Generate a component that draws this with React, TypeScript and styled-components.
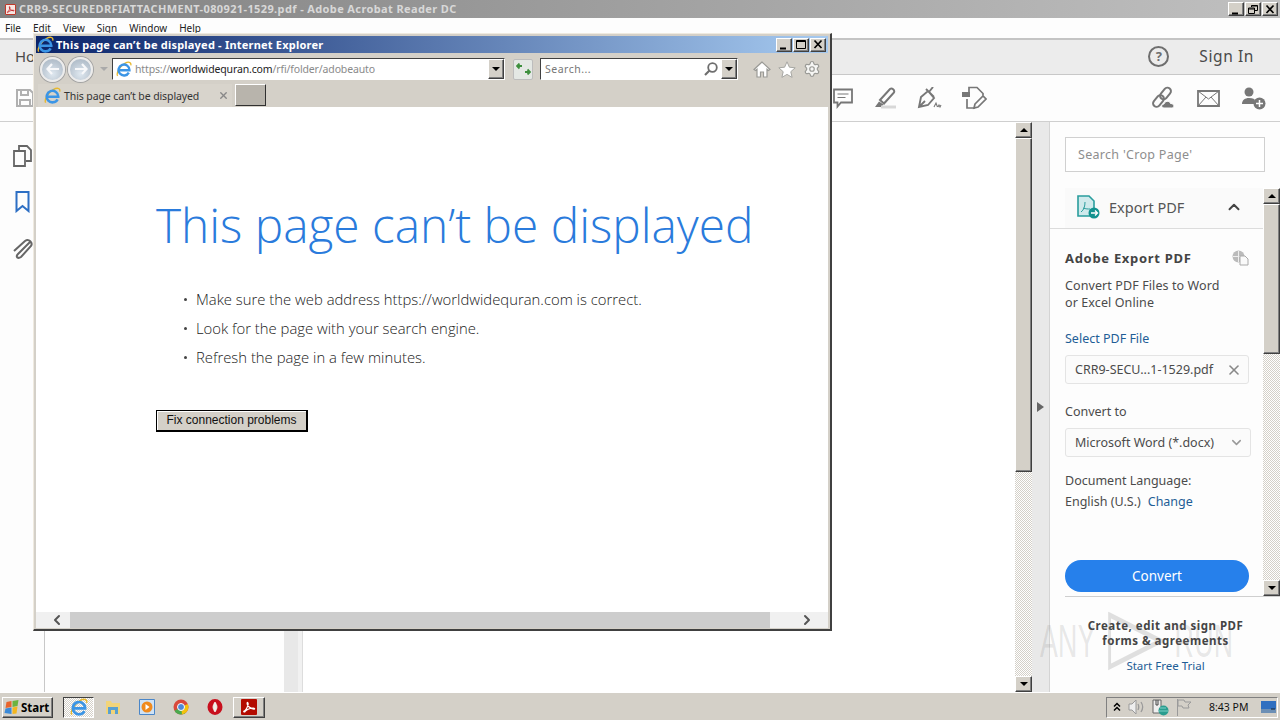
import React from 'react'
import styled, { createGlobalStyle } from 'styled-components'
import { ChevronDown, ChevronLeft, ChevronRight, ChevronUp, Settings, X } from 'lucide-react'

const classic = '#d4d0c8'
const ui = '"Noto Sans", "Open Sans", sans-serif'

const GlobalStyle = createGlobalStyle`
  html, body { margin: 0; padding: 0; width: 1280px; height: 720px; overflow: hidden; }
  * { box-sizing: border-box; }
  body { font-family: ${ui}; background: ${classic}; }
`

const Desktop = styled.div`
  position: relative;
  width: 1280px;
  height: 720px;
  display: flex;
  flex-direction: column;
  overflow: hidden;
`

/* ---------- win classic bits ---------- */

const Raised = styled.div<{ $w?: number; $h?: number; $bg?: string }>`
  width: ${({ $w }) => $w ?? 16}px;
  height: ${({ $h }) => $h ?? 16}px;
  flex: none;
  display: flex;
  align-items: center;
  justify-content: center;
  background: ${({ $bg }) => $bg ?? classic};
  border: 1px solid;
  border-color: #fff #404040 #404040 #fff;
  box-shadow: inset -1px -1px 0 #808080;
`

const Arrow = styled.span<{ $dir?: 'up' | 'down' }>`
  width: 0;
  height: 0;
  border-left: 4px solid transparent;
  border-right: 4px solid transparent;
  ${({ $dir }) => ($dir === 'up' ? 'border-bottom: 4px solid #000;' : 'border-top: 4px solid #000;')}
`

const WinButtons = styled.div`
  display: flex;
  gap: 1px;
`

const Scrollbar = styled.div`
  width: 17px;
  flex: none;
  display: flex;
  flex-direction: column;
  background: conic-gradient(#d4d0c8 25%, #fff 0 50%, #d4d0c8 0 75%, #fff 0);
  background-size: 2px 2px;
`

const ScrollThumb = styled(Raised)<{ $size: number }>`
  width: 100%;
  height: ${({ $size }) => $size}px;
`

const ScrollGap = styled.div`
  flex: 1;
`

const WinGlyph = ({ kind }: { kind: 'min' | 'max' | 'restore' | 'close' }) => (
  <svg width="12" height="11" viewBox="0 0 12 11" fill="none" stroke="#000">
    {kind === 'min' && <path d="M2 9.5h6" strokeWidth="2" />}
    {kind === 'max' && <path d="M1.5 1.5h9v8h-9zM1.5 2.5h9" />}
    {kind === 'restore' && <path d="M4.5 3V1.500h6v5H8M1.500 4h6v5.500h-6zM1.500 5h6M4.500 2h6" />}
    {kind === 'close' && <path d="M2.500 1.500l7 7.500M9.500 1.500l-7 7.500" strokeWidth="1.700" />}
  </svg>
)

/* ---------- drawn icons ---------- */

const IeLogo = ({ size }: { size: number }) => (
  <svg width={size} height={size} viewBox="0 0 20 20" fill="none">
    <path d="M2 18.500c-2-3 2-11 9-15.500 4-2.300 8.500-2.300 7.500 2.500" stroke="#e8b82c" strokeWidth="1.600" />
    <path d="M16 14.500A6.800 6.800 0 1 1 16.800 11.500H4.500" stroke="#3b95e6" strokeWidth="3" />
  </svg>
)

const AcrobatGlyph = ({ size, color = '#fff' }: { size: number; color?: string }) => (
  <svg width={size} height={size} viewBox="0 0 16 16" fill="none">
    <path
      d="M2 13c2-1 4-4 5-8 .3-2-1-3-1.200-1.500C5.500 6 9 10 13.500 10.500c1.500 0 1-1.500-1-1.300C9 9.500 5 11 3.500 13c-.5 1-1.500.5-1.500 0z"
      stroke={color}
      strokeWidth="1.400"
    />
  </svg>
)

const SaveIcon = () => (
  <svg width="20" height="20" viewBox="0 0 20 20" fill="none" stroke="#b0b0b0" strokeWidth="2">
    <path d="M2 2h13l3 3v13H2zM6 2v5h7V2M5 18v-6h10v6" />
  </svg>
)

const CommentIcon = () => (
  <svg width="20" height="21" viewBox="0 0 20 21" fill="none" stroke="#777" strokeWidth="1.800">
    <path d="M1 1.500h18v13H8l-3.500 4v-4H1z" />
    <path d="M4.500 6h11M4.500 9.500h8" strokeWidth="1" />
  </svg>
)

const HighlightIcon = () => (
  <svg width="24" height="22" viewBox="0 0 24 22" fill="none">
    <path d="M7 13L17 2c2-1.500 5 1 4 3.500L11 16.500z" stroke="#777" strokeWidth="2" />
    <path d="M6 14.500L2 20h6l2.500-2.500z" fill="#777" />
    <path d="M8 20h15" stroke="#d8d8d8" strokeWidth="3" />
  </svg>
)

const SignIcon = () => (
  <svg width="25" height="22" viewBox="0 0 25 22" fill="none" stroke="#777">
    <path d="M2 20l2-10 7-6 6 7-6 7zM2 20l6-6M12 5l4-5M9 2l8 8" strokeWidth="1.900" />
    <path d="M17 20l2-4 1.500 4M21 20l1-2 1 2 1-2" strokeWidth="1.100" />
  </svg>
)

const StampIcon = () => (
  <svg width="25" height="24" viewBox="0 0 25 24" fill="none" stroke="#777" strokeWidth="1.700">
    <path d="M7 6V1.500h8l6 6v2M5 13v9h8" />
    <path d="M0 6h8v5H0z" fill="#777" stroke="none" />
    <path d="M13 18l8-8 3 3-8 8-4 1z" />
  </svg>
)

const LinkCloudIcon = () => (
  <svg width="25" height="24" viewBox="0 0 25 24" fill="none">
    <rect x="1" y="11.500" width="13" height="7" rx="3.500" stroke="#777" strokeWidth="2" transform="rotate(-50 7.500 15)" />
    <rect x="8" y="4" width="13" height="7" rx="3.500" stroke="#777" strokeWidth="2" transform="rotate(-50 14.500 7.500)" />
    <path d="M13 22c-3 0-3-4 0-4 .5-3 5.500-4 6.500-.5 3.500-.5 5 4.500 1 4.500z" fill="#777" stroke="#fdfdfd" />
  </svg>
)

const MailIcon = () => (
  <svg width="23" height="17" viewBox="0 0 23 17" fill="none" stroke="#777">
    <path d="M1 1h21v15H1z" strokeWidth="1.800" />
    <path d="M1 1l10.500 8L22 1M1 16l8-9M22 16l-8-9" strokeWidth="1" />
  </svg>
)

const UserAddIcon = () => (
  <svg width="25" height="23" viewBox="0 0 25 23" fill="none">
    <circle cx="8" cy="5" r="4.500" fill="#777" />
    <path d="M1 17c0-4 3-6 7-6s6 1 6 3l-1 3z" fill="#777" />
    <circle cx="18.500" cy="16.500" r="6" fill="#777" />
    <path d="M18.500 13v7M15 16.500h7" stroke="#fff" strokeWidth="1.500" />
  </svg>
)

const PagesIcon = () => (
  <svg width="19" height="22" viewBox="0 0 19 22" fill="none" stroke="#666" strokeWidth="1.800">
    <path d="M6 5V1h8l4 4v11h-5" />
    <path d="M1 6h11v15H1z" />
  </svg>
)

const BookmarkIcon = () => (
  <svg width="15" height="22" viewBox="0 0 15 22" fill="none" stroke="#2d6fc4" strokeWidth="2">
    <path d="M1.500 1h12v19l-6-5-6 5z" />
  </svg>
)

const ClipIcon = () => (
  <svg width="21" height="22" viewBox="0 0 21 22" fill="none" stroke="#666" strokeWidth="2">
    <path d="M18 5L6 17c-3 3 0 5 3 3L19 9c2-3-2-8-6-5L2 14" />
  </svg>
)

const ExportIcon = () => (
  <svg width="23" height="24" viewBox="0 0 23 24" fill="none">
    <path d="M1 1h11l5 5v15H1z" fill="#cfeaec" stroke="#2a9d9d" strokeWidth="1.600" />
    <path d="M4 17c3-2 4-6 4-10M6 13c3 1 5 1 7 1" stroke="#2a9d9d" />
    <circle cx="17" cy="18" r="5.500" fill="#12928f" />
    <path d="M14 18h6M18 15.500l2.500 2.500-2.500 2.500" stroke="#fff" strokeWidth="1.300" />
  </svg>
)

const CloudDocIcon = () => (
  <svg width="17" height="16" viewBox="0 0 17 16" fill="none">
    <circle cx="6.500" cy="6.500" r="6" fill="#bbb" />
    <path d="M1 6.500h11M6.500 1v11" stroke="#eee" />
    <path d="M8 6h5l3 3v6H8z" fill="#fafafa" stroke="#aaa" />
  </svg>
)

const RefreshIcon = () => (
  <svg width="15" height="12" viewBox="0 0 15 12" fill="none" stroke="#3d8f3d" strokeWidth="1.800">
    <path d="M6 3H1M3.500 .5L1 3l2.500 2.500M9 9h5M11.500 11.500L14 9l-2.500-2.500" />
  </svg>
)

const NavArrow = ({ back }: { back?: boolean }) => (
  <svg width="14" height="12" viewBox="0 0 14 12" fill="none" stroke="#f7f8fa" strokeWidth="2.200">
    <path d={back ? 'M13 6H2M6 1L1.500 6 6 11' : 'M1 6h11M8 1l4.500 5L8 11'} />
  </svg>
)

const MagnifierIcon = () => (
  <svg width="14" height="14" viewBox="0 0 14 14" fill="none" stroke="#6e6e6e" strokeWidth="1.800">
    <circle cx="8.500" cy="5.500" r="4.300" />
    <path d="M5.500 8.500L1 13" strokeWidth="2.200" />
  </svg>
)

const HomeGlyph = () => (
  <svg width="18" height="17" viewBox="0 0 18 17" fill="#fff" stroke="#9a9a96" strokeWidth="1.200">
    <path d="M9 1L1 8.500l1.500 1L4 8.200V16h3.500v-5h3v5H14V8.200l1.500 1.300L17 8.500z" />
  </svg>
)

const StarGlyph = () => (
  <svg width="18" height="17" viewBox="0 0 18 17" fill="#fff" stroke="#a6a6a2">
    <path d="M9 .8l2.400 5.400 5.800.6-4.400 3.900 1.300 5.700L9 13.400l-5.100 3 1.300-5.700L.8 6.800l5.800-.6z" />
  </svg>
)

const StartFlag = () => (
  <svg width="17" height="15" viewBox="0 0 16 15">
    <path d="M2 2l5-1v6l-6 1z" fill="#e8642c" />
    <path d="M8 1l6-1-1 6-5 1z" fill="#6cb33f" />
    <path d="M1 8.500l6-1V14l-7-1z" fill="#3b8ad8" />
    <path d="M8 7.500l5-1-1 7-4 .5z" fill="#f3b61f" />
  </svg>
)

const FolderIcon = () => (
  <svg width="16" height="16" viewBox="0 0 16 16">
    <path d="M1 2h5l1 2h8v11H1z" fill="#f2d479" />
    <path d="M3 8h10v7h-3v-4H6v4H3z" fill="#5aa0d0" />
  </svg>
)

const MediaIcon = () => (
  <svg width="16" height="16" viewBox="0 0 16 16">
    <path d="M.5 .5h15v15H.5z" fill="#cfe2f5" stroke="#4a86c8" />
    <circle cx="8" cy="8" r="5.500" fill="#f08a1d" />
    <path d="M6.500 5l4 3-4 3z" fill="#fff" />
  </svg>
)

const ChromeIcon = () => (
  <svg width="16" height="16" viewBox="0 0 16 16">
    <circle cx="8" cy="8" r="7.500" fill="#d9483b" />
    <path d="M8 8L1.500 11.700A7.500 7.500 0 0 0 8 15.500c2 0 4-.8 5-2z" fill="#4aa94e" />
    <path d="M8 8l6.800-3A7.500 7.500 0 0 1 9 15.400z" fill="#f4c20d" />
    <circle cx="8" cy="8" r="3.500" fill="#4f88d8" stroke="#fff" />
  </svg>
)

const OperaIcon = () => (
  <svg width="16" height="16" viewBox="0 0 16 16" fill="none">
    <ellipse cx="8" cy="8" rx="5" ry="5.500" stroke="#c8101e" strokeWidth="5" />
    <ellipse cx="8" cy="8" rx="1.700" ry="5" fill="#f4f0ea" />
  </svg>
)

const AcrobatTile = styled.div<{ $size: number }>`
  width: ${({ $size }) => $size}px;
  height: ${({ $size }) => $size}px;
  flex: none;
  display: flex;
  align-items: center;
  justify-content: center;
  background: #b30b00;
  border-radius: 1px;
`

const TitleTile = styled(AcrobatTile)`
  background: #f7e6e2;
  border: 1px solid #c0392b;
`

const SpeakerIcon = () => (
  <svg width="17" height="16" viewBox="0 0 17 16" fill="none" stroke="#9a9a9a">
    <path d="M1 5h3l4-4v14l-4-4H1z" fill="#eee" />
    <path d="M10 5c1 2 1 4 0 6M13 3c2 3 2 7 0 10" strokeWidth="1.300" />
  </svg>
)

const NetworkIcon = () => (
  <svg width="17" height="17" viewBox="0 0 17 17">
    <path d="M1 1h8v13H1z" fill="#eee" stroke="#666" />
    <path d="M4 1v5h2V1" fill="none" stroke="#444" />
    <circle cx="11.500" cy="11.500" r="5" fill="#2a9d8f" />
    <path d="M8 9h6M7 12h9" stroke="#7fd1c7" />
  </svg>
)

const FlagIcon = () => (
  <svg width="16" height="17" viewBox="0 0 16 17" fill="none" stroke="#9a9a9a">
    <path d="M1.500 0v17M2 1h6l1 2h6l-3 3 1 3H7L6 7H2z" />
  </svg>
)

const ScreenIcon = () => (
  <svg width="15" height="12" viewBox="0 0 15 12">
    <rect width="15" height="12" fill="#2f6fc0" />
    <rect y="8" width="15" height="4" fill="#6c8fb5" />
    <path d="M10 8h4" stroke="#123" />
  </svg>
)

const TrayChevron = () => (
  <svg width="8" height="10" viewBox="0 0 8 10" fill="none" stroke="#000" strokeWidth="1.500">
    <path d="M1 4.500L4 1.500l3 3M1 8.500l3-3 3 3" />
  </svg>
)

/* ---------- acrobat ---------- */

const Acrobat = styled.div`
  height: 692px;
  flex: none;
  display: flex;
  flex-direction: column;
  background: #fff;
`

const AppTitle = styled.div`
  height: 18px;
  flex: none;
  display: flex;
  align-items: center;
  padding: 0 2px 0 5px;
  background: linear-gradient(90deg, #808080, #c0c0c0);
  color: #d8d8d8;
  font: bold 11px/18px "Noto Sans", sans-serif;
  letter-spacing: 0.38px;
`

const AppTitleText = styled.span`
  flex: 1;
  margin-left: 3px;
  white-space: nowrap;
`

const MenuBar = styled.div`
  height: 20px;
  flex: none;
  display: flex;
  align-items: center;
  gap: 12px;
  padding-left: 5px;
  background: #fdfdfd;
  color: #222;
  font-size: 10px;
`

const TabBar = styled.div`
  height: 37px;
  flex: none;
  display: flex;
  align-items: center;
  padding: 0 26px 2px 15px;
  background: #ececec;
  border-top: 2px solid #c4c4c4;
  border-bottom: 1px solid #c8c8c8;
  color: #4a4a4a;
`

const HomeTab = styled.span`
  flex: 1;
  font-size: 15px;
`

const HelpBadge = styled.span`
  width: 21px;
  height: 21px;
  display: flex;
  align-items: center;
  justify-content: center;
  margin-right: 30px;
  border: 2px solid #6e6e6e;
  border-radius: 50%;
  color: #6e6e6e;
  font-size: 13px;
  font-weight: 700;
`

const SignInLabel = styled.span`
  font-size: 15.500px;
  letter-spacing: 0.6px;
`

const ToolBar = styled.div`
  height: 47px;
  flex: none;
  display: flex;
  align-items: center;
  padding: 0 14px 0 15px;
  background: #fdfdfd;
  border-bottom: 1px solid #cfcfcf;
`

const ToolGroup = styled.div<{ $gap: number; $lead?: number }>`
  display: flex;
  align-items: center;
  gap: ${({ $gap }) => $gap}px;
  margin-left: ${({ $lead }) => $lead ?? 0}px;
  flex: none;
`

const ToolSpacer = styled.div`
  flex: 1;
`

const Workspace = styled.div`
  flex: 1;
  min-height: 0;
  display: flex;
`

const LeftRail = styled.div`
  width: 45px;
  flex: none;
  display: flex;
  flex-direction: column;
  align-items: center;
  gap: 24px;
  padding: 23px 12px 0;
  background: #fdfdfd;
  border-right: 1px solid #c8c8c8;
`

const ThumbPane = styled.div`
  width: 239px;
  flex: none;
  background: #fefefe;
`

const PaneDivider = styled.div`
  width: 19px;
  flex: none;
  background: linear-gradient(90deg, #e8e8e8 0 14px, #f1f1f1 14px);
  border-right: 1px solid #ddd;
`

const PageView = styled.div`
  flex: 1;
  background: #fff;
`

const CollapseGutter = styled.div`
  width: 18px;
  flex: none;
  display: flex;
  align-items: center;
  justify-content: center;
  background: #e9e9e9;
  border-right: 1px solid #d4d4d4;
`

const GutterArrow = styled.span`
  border-top: 5px solid transparent;
  border-bottom: 5px solid transparent;
  border-left: 7px solid #666;
`

const SidePanel = styled.div`
  width: 230px;
  flex: none;
  display: flex;
  flex-direction: column;
  padding-top: 15px;
  background: #fdfdfd;
  color: #4b4b4b;
  font-size: 12.500px;
`

const SearchBox = styled.div`
  width: 200px;
  height: 35px;
  flex: none;
  margin-left: 15px;
  padding-left: 12px;
  display: flex;
  align-items: center;
  background: #fff;
  border: 1px solid #d0d0d0;
  color: #8e8e8e;
  font-size: 12.500px;
  letter-spacing: 0.3px;
`

const PanelScroll = styled.div`
  flex: none;
  height: 408px;
  margin-top: 16px;
  display: flex;
`

const PanelColumn = styled.div`
  flex: 1;
  min-width: 0;
  display: flex;
  flex-direction: column;
`

const ExportHeader = styled.div`
  height: 40px;
  flex: none;
  margin-left: 15px;
  padding: 0 20px 2px 12px;
  display: flex;
  align-items: center;
  background: #fafafa;
  font-size: 14.500px;
  color: #555;
`

const ExportTitle = styled.span`
  flex: 1;
  margin-left: 9px;
`

const ExportBody = styled.div`
  flex: 1;
  display: flex;
  flex-direction: column;
  padding: 20px 14px 4px 15px;
  border-top: 1px solid #dcdcdc;
`

const BodyHeading = styled.div`
  height: 17px;
  display: flex;
  align-items: center;
  justify-content: space-between;
  color: #444;
  font-size: 13px;
  font-weight: 700;
  letter-spacing: 0.7px;
`

const BodyText = styled.div`
  margin-top: 11px;
  line-height: 17px;
  letter-spacing: 0.1px;
`

const FieldLabel = styled.div<{ $top: number; $link?: boolean }>`
  margin-top: ${({ $top }) => $top}px;
  line-height: 17px;
  color: ${({ $link }) => ($link ? '#1f5d96' : 'inherit')};
`

const FieldBox = styled.div<{ $w: number }>`
  width: ${({ $w }) => $w}px;
  height: 29px;
  flex: none;
  margin-top: 8px;
  padding: 0 6px 0 9px;
  display: flex;
  align-items: center;
  justify-content: space-between;
  background: #fbfbfb;
  border: 1px solid #e4e4e4;
  border-radius: 3px;
  white-space: nowrap;
`

const ChangeLink = styled.span`
  margin-left: 7px;
  color: #1f5d96;
`

const ConvertButton = styled.div`
  height: 32px;
  flex: none;
  margin-top: auto;
  display: flex;
  align-items: center;
  justify-content: center;
  border-radius: 16px;
  background: #2680eb;
  color: #fff;
  font-size: 13.500px;
`

const PanelRule = styled.div`
  height: 1px;
  flex: none;
  margin-left: 15px;
  background: #cfcfcf;
`

const Promo = styled.div`
  position: relative;
  flex: 1;
  display: flex;
  flex-direction: column;
  align-items: center;
  padding: 21px 0 0 1px;
  text-align: center;
  color: #444;
  font-size: 11.500px;
  font-weight: 700;
  line-height: 15px;
  letter-spacing: 0.5px;
`

const PromoLink = styled.div`
  margin-top: 10px;
  color: #1f5d96;
  font-weight: 400;
  letter-spacing: 0;
`

const Watermark = styled.div`
  position: absolute;
  left: -10px;
  top: 14px;
  display: flex;
  align-items: center;
  gap: 18px;
  color: rgba(120, 120, 120, 0.18);
  font: 400 46px/50px "Liberation Sans", sans-serif;
  white-space: nowrap;
  pointer-events: none;
  transform: scaleX(0.58);
  transform-origin: left center;
`

/* ---------- internet explorer window ---------- */

const IeWindow = styled.div`
  position: absolute;
  left: 33px;
  top: 33px;
  width: 799px;
  height: 598px;
  display: flex;
  flex-direction: column;
  padding: 2px 2px 1px 2px;
  background: ${classic};
  border-right: 2px solid #404040;
  border-bottom: 2px solid #404040;
  border-top: 1px solid #efeae0;
  border-left: 1px solid #efeae0;
`

const IeTitle = styled.div`
  height: 17px;
  flex: none;
  display: flex;
  align-items: center;
  padding: 0 2px 0 1px;
  background: linear-gradient(90deg, #0a246a, #a6caf0);
  color: #fff;
  font: bold 11px/17px "Noto Sans", sans-serif;
  letter-spacing: 0.21px;
`

const IeTitleText = styled.span`
  flex: 1;
  margin-left: 2px;
  white-space: nowrap;
`

const IeToolbar = styled.div`
  height: 31px;
  flex: none;
  display: flex;
  align-items: center;
  padding: 1px 14px 0 4px;
`

const NavButton = styled.div`
  width: 25px;
  height: 25px;
  margin-right: 3px;
  flex: none;
  display: flex;
  align-items: center;
  justify-content: center;
  border-radius: 50%;
  background: radial-gradient(circle at 50% 70%, #dfe8f0, #b4c0cc 72%);
  border: 2px solid #ececec;
  box-shadow: 0 0 0 1px #a4a4a4;
`

const NavDrop = styled.span`
  margin: 0 4px;
  border-left: 4px solid transparent;
  border-right: 4px solid transparent;
  border-top: 4px solid #aaa;
`

const SunkenField = styled.div<{ $w: number }>`
  width: ${({ $w }) => $w}px;
  height: 22px;
  flex: none;
  display: flex;
  align-items: center;
  background: #fff;
  border: 1px solid;
  border-color: #404040 #fff #fff #404040;
  font-size: 10.500px;
`

const AddressIcon = styled.span`
  display: flex;
  margin-left: 3px;
`

const AddressHost = styled.span`
  flex: 1;
  margin-left: 3px;
  color: #8a8a8a;
  white-space: nowrap;
  letter-spacing: -0.14px;
`

const AddressStrong = styled.span`
  color: #222;
`

const SearchHint = styled.span`
  flex: 1;
  margin-left: 4px;
  color: #777;
  letter-spacing: 0.5px;
`

const MagnifierSlot = styled.span`
  display: flex;
  margin-right: 3px;
`

const FavGroup = styled.div`
  display: flex;
  align-items: center;
  gap: 7px;
  margin-left: 15px;
`

const RefreshButton = styled.div`
  width: 20px;
  height: 21px;
  flex: none;
  margin: 0 7px 0 8px;
  display: flex;
  align-items: center;
  justify-content: center;
  background: #e4e8e4;
  border: 1px solid #bdbdbd;
  border-radius: 2px;
`

const IeTabs = styled.div`
  height: 23px;
  flex: none;
  display: flex;
  align-items: stretch;
  gap: 3px;
  padding-left: 2px;
`

const IeTab = styled.div`
  width: 194px;
  display: flex;
  align-items: center;
  padding: 0 3px 0 6px;
  background: #d8d4cc;
  color: #333;
  font-size: 10.500px;
`

const IeTabText = styled.span`
  flex: 1;
  margin-left: 3px;
  white-space: nowrap;
  letter-spacing: -0.1px;
`

const NewTab = styled(Raised)`
  width: 31px;
  height: 22px;
  background: #b8b4ac;
  border-color: #fff #303030 #303030 #fff;
  box-shadow: none;
`

const IeContent = styled.div`
  flex: 1;
  min-height: 0;
  padding: 87px 0 0 120px;
  background: #fff;
`

const ErrorTitle = styled.h1`
  margin: 0;
  color: #2a7bdc;
  font: 300 47.800px/62px "Open Sans", sans-serif;
  white-space: nowrap;
`

const Tips = styled.ul`
  margin: 29px 0 0;
  padding: 0 0 0 40px;
  list-style: none;
`

const Tip = styled.li`
  position: relative;
  height: 29px;
  color: #222;
  font: 300 14.850px/29px "Open Sans", sans-serif;
  white-space: nowrap;

  &::before {
    content: '';
    position: absolute;
    left: -12px;
    top: 13px;
    width: 3px;
    height: 3px;
    border-radius: 50%;
    background: #444;
  }
`

const FixButton = styled.button`
  display: block;
  width: 152px;
  height: 22px;
  margin-top: 38px;
  padding: 0 0 1px;
  background: ${classic};
  border: 1px solid #000;
  border-right-width: 2px;
  border-bottom-width: 2px;
  box-shadow: inset 1px 1px 0 #fff;
  color: #111;
  font: 12px "Liberation Sans", sans-serif;
`

const HScroll = styled.div`
  height: 16px;
  flex: none;
  display: flex;
  align-items: center;
  background: #f0f0f0;
  color: #555;
`

const HScrollEnd = styled.div<{ $w: number; $inset: number }>`
  width: ${({ $w }) => $w}px;
  height: 100%;
  flex: none;
  padding-left: ${({ $inset }) => $inset}px;
  display: flex;
  align-items: center;
  justify-content: center;
`

const HScrollThumb = styled.div`
  flex: 1;
  height: 100%;
  background: #cdcdcd;
`

/* ---------- taskbar ---------- */

const Taskbar = styled.div`
  flex: 1;
  display: flex;
  align-items: center;
  padding: 1px 2px 0 2px;
  background: ${classic};
  border-top: 1px solid #fff;
`

const StartButton = styled(Raised)`
  width: 51px;
  height: 21px;
  gap: 0;
  justify-content: flex-start;
  padding-left: 1px;
  color: #000;
  font-size: 11.500px;
  font-weight: 700;
`

const IeTask = styled.div`
  width: 31px;
  height: 21px;
  flex: none;
  margin-left: 10px;
  display: flex;
  align-items: center;
  justify-content: center;
  border: 1px solid;
  border-color: #404040 #fff #fff #404040;
  background: conic-gradient(#d4d0c8 25%, #fff 0 50%, #d4d0c8 0 75%, #fff 0);
  background-size: 2px 2px;
`

const QuickLaunch = styled.div`
  display: flex;
  align-items: center;
  gap: 18px;
  margin-left: 11px;
`

const AcrobatTask = styled(Raised)`
  width: 32px;
  height: 21px;
  margin-left: 10px;
`

const TaskSpacer = styled.div`
  flex: 1;
`

const Tray = styled.div`
  width: 172px;
  height: 21px;
  flex: none;
  display: flex;
  align-items: center;
  padding: 0 1px 0 6px;
  border: 1px solid;
  border-color: #808080 #fff #fff #808080;
`

const TrayIcons = styled.div`
  display: flex;
  align-items: center;
  gap: 7px;
`

const Clock = styled.span`
  flex: 1;
  margin-left: 17px;
  color: #111;
  font-size: 10.500px;
  white-space: nowrap;
`

const appTitle = 'CRR9-SECUREDRFIATTACHMENT-080921-1529.pdf - Adobe Acrobat Reader DC'

export default function App() {
  return (
    <>
      <GlobalStyle />
      <Desktop>
        <Acrobat>
          <AppTitle>
            <TitleTile $size={11}>
              <AcrobatGlyph size={9} color="#c0161a" />
            </TitleTile>
            <AppTitleText>{appTitle}</AppTitleText>
            <WinButtons>
              <Raised $w={16} $h={14}><WinGlyph kind="min" /></Raised>
              <Raised $w={16} $h={14}><WinGlyph kind="restore" /></Raised>
              <Raised $w={16} $h={14}><WinGlyph kind="close" /></Raised>
            </WinButtons>
          </AppTitle>
          <MenuBar>
            {['File', 'Edit', 'View', 'Sign', 'Window', 'Help'].map(m => (
              <span key={m}>{m}</span>
            ))}
          </MenuBar>
          <TabBar>
            <HomeTab>Home</HomeTab>
            <HelpBadge>?</HelpBadge>
            <SignInLabel>Sign In</SignInLabel>
          </TabBar>
          <ToolBar>
            <SaveIcon />
            <ToolGroup $gap={20} $lead={798}>
              <CommentIcon />
              <HighlightIcon />
              <SignIcon />
              <StampIcon />
            </ToolGroup>
            <ToolSpacer />
            <ToolGroup $gap={21}>
              <LinkCloudIcon />
              <MailIcon />
              <UserAddIcon />
            </ToolGroup>
          </ToolBar>
          <Workspace>
            <LeftRail>
              <PagesIcon />
              <BookmarkIcon />
              <ClipIcon />
            </LeftRail>
            <ThumbPane />
            <PaneDivider />
            <PageView />
            <Scrollbar>
              <Raised $w={17} $h={16}><Arrow $dir="up" /></Raised>
              <ScrollThumb $size={334} />
              <ScrollGap />
              <Raised $w={17} $h={16}><Arrow /></Raised>
            </Scrollbar>
            <CollapseGutter>
              <GutterArrow />
            </CollapseGutter>
            <SidePanel>
              <SearchBox>Search 'Crop Page'</SearchBox>
              <PanelScroll>
                <PanelColumn>
                  <ExportHeader>
                    <ExportIcon />
                    <ExportTitle>Export PDF</ExportTitle>
                    <ChevronUp size={18} strokeWidth={2.6} color="#444" />
                  </ExportHeader>
                  <ExportBody>
                    <BodyHeading>
                      Adobe Export PDF
                      <CloudDocIcon />
                    </BodyHeading>
                    <BodyText>
                      Convert PDF Files to Word
                      <br />
                      or Excel Online
                    </BodyText>
                    <FieldLabel $top={19} $link>Select PDF File</FieldLabel>
                    <FieldBox $w={184}>
                      CRR9-SECU...1-1529.pdf
                      <X size={16} strokeWidth={2.4} color="#888" />
                    </FieldBox>
                    <FieldLabel $top={19}>Convert to</FieldLabel>
                    <FieldBox $w={186}>
                      Microsoft Word (*.docx)
                      <ChevronDown size={15} strokeWidth={2.4} color="#999" />
                    </FieldBox>
                    <FieldLabel $top={15}>Document Language:</FieldLabel>
                    <FieldLabel $top={4}>
                      English (U.S.)<ChangeLink>Change</ChangeLink>
                    </FieldLabel>
                    <ConvertButton>Convert</ConvertButton>
                  </ExportBody>
                </PanelColumn>
                <Scrollbar>
                  <Raised $w={17} $h={16}><Arrow $dir="up" /></Raised>
                  <ScrollThumb $size={150} />
                  <ScrollGap />
                  <Raised $w={17} $h={16}><Arrow /></Raised>
                </Scrollbar>
              </PanelScroll>
              <PanelRule />
              <Promo>
                <Watermark>
                  ANY
                  <svg width="100" height="60" viewBox="0 0 100 60" fill="none" stroke="rgba(120,120,120,0.22)" strokeWidth="5">
                    <path d="M6 4l88 26L6 56z" />
                  </svg>
                  RUN
                </Watermark>
                Create, edit and sign PDF
                <br />
                forms &amp; agreements
                <PromoLink>Start Free Trial</PromoLink>
              </Promo>
            </SidePanel>
          </Workspace>
        </Acrobat>

        <Taskbar>
          <StartButton>
            <StartFlag />
            Start
          </StartButton>
          <IeTask>
            <IeLogo size={18} />
          </IeTask>
          <QuickLaunch>
            <FolderIcon />
            <MediaIcon />
            <ChromeIcon />
            <OperaIcon />
          </QuickLaunch>
          <AcrobatTask>
            <AcrobatTile $size={16}>
              <AcrobatGlyph size={14} />
            </AcrobatTile>
          </AcrobatTask>
          <TaskSpacer />
          <Tray>
            <TrayIcons>
              <TrayChevron />
              <SpeakerIcon />
              <NetworkIcon />
              <FlagIcon />
            </TrayIcons>
            <Clock>8:43 PM</Clock>
            <ScreenIcon />
          </Tray>
        </Taskbar>

        <IeWindow>
          <IeTitle>
            <IeLogo size={17} />
            <IeTitleText>This page can’t be displayed - Internet Explorer</IeTitleText>
            <WinButtons>
              <Raised $w={16} $h={14}><WinGlyph kind="min" /></Raised>
              <Raised $w={16} $h={14}><WinGlyph kind="max" /></Raised>
              <Raised $w={16} $h={14}><WinGlyph kind="close" /></Raised>
            </WinButtons>
          </IeTitle>
          <IeToolbar>
            <NavButton><NavArrow back /></NavButton>
            <NavButton><NavArrow /></NavButton>
            <NavDrop />
            <SunkenField $w={393}>
              <AddressIcon><IeLogo size={16} /></AddressIcon>
              <AddressHost>
                https://<AddressStrong>worldwidequran.com</AddressStrong>/rfi/folder/adobeauto
              </AddressHost>
              <Raised $w={16} $h={20}><Arrow /></Raised>
            </SunkenField>
            <RefreshButton><RefreshIcon /></RefreshButton>
            <SunkenField $w={198}>
              <SearchHint>Search...</SearchHint>
              <MagnifierSlot><MagnifierIcon /></MagnifierSlot>
              <Raised $w={16} $h={20}><Arrow /></Raised>
            </SunkenField>
            <FavGroup>
              <HomeGlyph />
              <StarGlyph />
              <Settings size={18} strokeWidth={1.6} color="#9a9a96" fill="#f6f6f4" />
            </FavGroup>
          </IeToolbar>
          <IeTabs>
            <IeTab>
              <IeLogo size={17} />
              <IeTabText>This page can’t be displayed</IeTabText>
              <X size={11} strokeWidth={3} color="#888" />
            </IeTab>
            <NewTab />
          </IeTabs>
          <IeContent>
            <ErrorTitle>This page can’t be displayed</ErrorTitle>
            <Tips>
              <Tip>Make sure the web address https://worldwidequran.com is correct.</Tip>
              <Tip>Look for the page with your search engine.</Tip>
              <Tip>Refresh the page in a few minutes.</Tip>
            </Tips>
            <FixButton>Fix connection problems</FixButton>
          </IeContent>
          <HScroll>
            <HScrollEnd $w={34} $inset={8}><ChevronLeft size={16} strokeWidth={3} /></HScrollEnd>
            <HScrollThumb />
            <HScrollEnd $w={58} $inset={16}><ChevronRight size={16} strokeWidth={3} /></HScrollEnd>
          </HScroll>
        </IeWindow>
      </Desktop>
    </>
  )
}
